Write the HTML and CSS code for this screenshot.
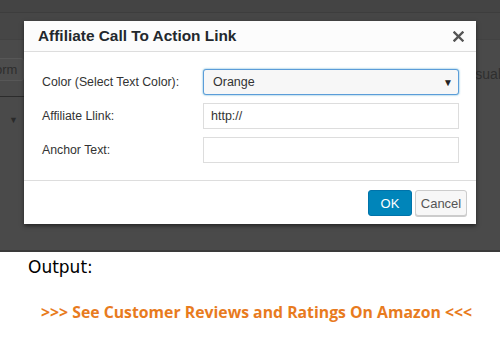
FILE: index.html
```html
<!DOCTYPE html>
<html lang="en">
<head>
  <meta charset="UTF-8">
  <title>Affiliate Call To Action Link</title>
  <link rel="stylesheet" href="styles.css">
</head>
<body>
  <div class="editor">
    <div class="editor-top"></div>
    <div class="editor-tabs">
      <span class="tab-visual">Visual</span>
    </div>
    <div class="editor-toolbar">
      <span class="form-btn">Form</span>
    </div>
    <div class="editor-rule"></div>
    <div class="editor-arrow">&#9660;</div>

    <!-- dialog over the editor -->
    <div class="modal">
      <div class="modal-header">
        <h2>Affiliate Call To Action Link</h2>
        <svg class="close-btn" width="11" height="11" viewBox="0 0 11 11">
          <path d="M1.5 1.5 L9.5 9.5 M9.5 1.5 L1.5 9.5" stroke="#555" stroke-width="2.4" stroke-linecap="square"/>
        </svg>
      </div>
      <div class="modal-body">
        <div class="field">
          <label>Color (Select Text Color):</label>
          <div class="select">
            <span>Orange</span>
            <span class="caret">&#9660;</span>
          </div>
        </div>
        <div class="field">
          <label>Affiliate Llink:</label>
          <div class="input">http://</div>
        </div>
        <div class="field">
          <label>Anchor Text:</label>
          <div class="input"></div>
        </div>
      </div>
      <div class="modal-footer">
        <button class="btn btn-ok">OK</button>
        <button class="btn btn-cancel">Cancel</button>
      </div>
    </div>
  </div>

  <div class="output">
    <p class="output-label">Output:</p>
    <a class="cta-link">&gt;&gt;&gt; See Customer Reviews and Ratings On Amazon &lt;&lt;&lt;</a>
  </div>
</body>
</html>
```

FILE: styles.css
```css
* {
  margin: 0;
  padding: 0;
  box-sizing: border-box;
}

body {
  font-family: 'Liberation Sans', Arial, sans-serif;
  background: #fff;
  width: 500px;
  overflow: hidden;
}

.editor {
  position: relative;
  height: 252px;
  background: #4a4a4a;
  border-bottom: 2px solid #3a3a3a;
  overflow: hidden;
}

.editor-top {
  height: 13px;
  background: #444;
  border-bottom: 1px solid #3d3d3d;
}

.editor-tabs {
  height: 27px;
  background: #464646;
  border-bottom: 1px solid #424242;
  display: flex;
  justify-content: flex-end;
  align-items: flex-end;
}

.tab-visual {
  font-size: 14px;
  color: #2f2f2f;
  margin-right: -1px;
  margin-bottom: -43px;
}

.editor-toolbar {
  padding: 18px 0 0 0;
  height: 56px;
}

.form-btn {
  display: inline-block;
  margin-left: -22px;
  padding: 3px 6px 3px 8px;
  font-size: 13px;
  color: #2e2e2e;
  background: #4d4d4d;
  border: 1px solid #575757;
  border-radius: 3px;
}

.editor-rule {
  width: 28px;
  height: 1px;
  background: #2c2c2c;
}

.editor-arrow {
  margin: 18px 0 0 9px;
  font-size: 9px;
  color: #2a2a2a;
}

.modal {
  position: absolute;
  top: 21px;
  left: 24px;
  width: 452px;
  background: #fff;
  box-shadow: 0 2px 4px rgba(0, 0, 0, 0.5);
}

.modal-header {
  display: flex;
  justify-content: space-between;
  align-items: center;
  height: 31px;
  padding: 0 12px 0 14px;
  background: #fcfcfc;
  border-bottom: 1px solid #ddd;
}

.modal-header h2 {
  font-size: 15.4px;
  font-weight: bold;
  color: #23282d;
}

.close-btn {
  display: block;
}

.modal-body {
  display: flex;
  flex-direction: column;
  gap: 8px;
  padding: 17px 17px 17px 18px;
  border-bottom: 1px solid #ddd;
}

.field {
  display: flex;
  align-items: center;
}

.field label {
  width: 161px;
  font-size: 12.3px;
  color: #333;
}

.select,
.input {
  flex: 1;
  height: 26px;
  display: flex;
  align-items: center;
  padding: 0 7px;
  font-size: 12.5px;
  color: #333;
  border: 1px solid #ddd;
  background: #fff;
}

.select {
  justify-content: space-between;
  padding: 0 5px 0 9px;
  background: #f7f7f7;
  border: 1px solid #5b9dd9;
  border-radius: 3px;
  box-shadow: 0 0 2px rgba(30, 140, 190, 0.8);
}

.caret {
  font-size: 10px;
  color: #222;
}

.modal-footer {
  display: flex;
  justify-content: flex-end;
  gap: 3px;
  padding: 9px 9px 8px 0;
}

.btn {
  height: 26px;
  padding: 0;
  font-family: 'Liberation Sans', Arial, sans-serif;
  font-size: 13px;
  border-radius: 3px;
  cursor: pointer;
}

.btn-ok {
  width: 44px;
  color: #fff;
  background: #0085ba;
  border: 1px solid #0073aa;
}

.btn-cancel {
  width: 52px;
  color: #555;
  background: #f7f7f7;
  border: 1px solid #ccc;
  box-shadow: 0 1px 0 #ccc;
}

.output {
  padding: 5px 0 0 28px;
}

.output-label {
  font-family: 'DejaVu Sans', sans-serif;
  font-size: 17px;
  color: #000;
}

.cta-link {
  display: block;
  margin: 24px 0 0 13px;
  font-family: 'Open Sans', sans-serif;
  font-weight: bold;
  font-size: 15.8px;
  color: #e87b1e;
}
```
